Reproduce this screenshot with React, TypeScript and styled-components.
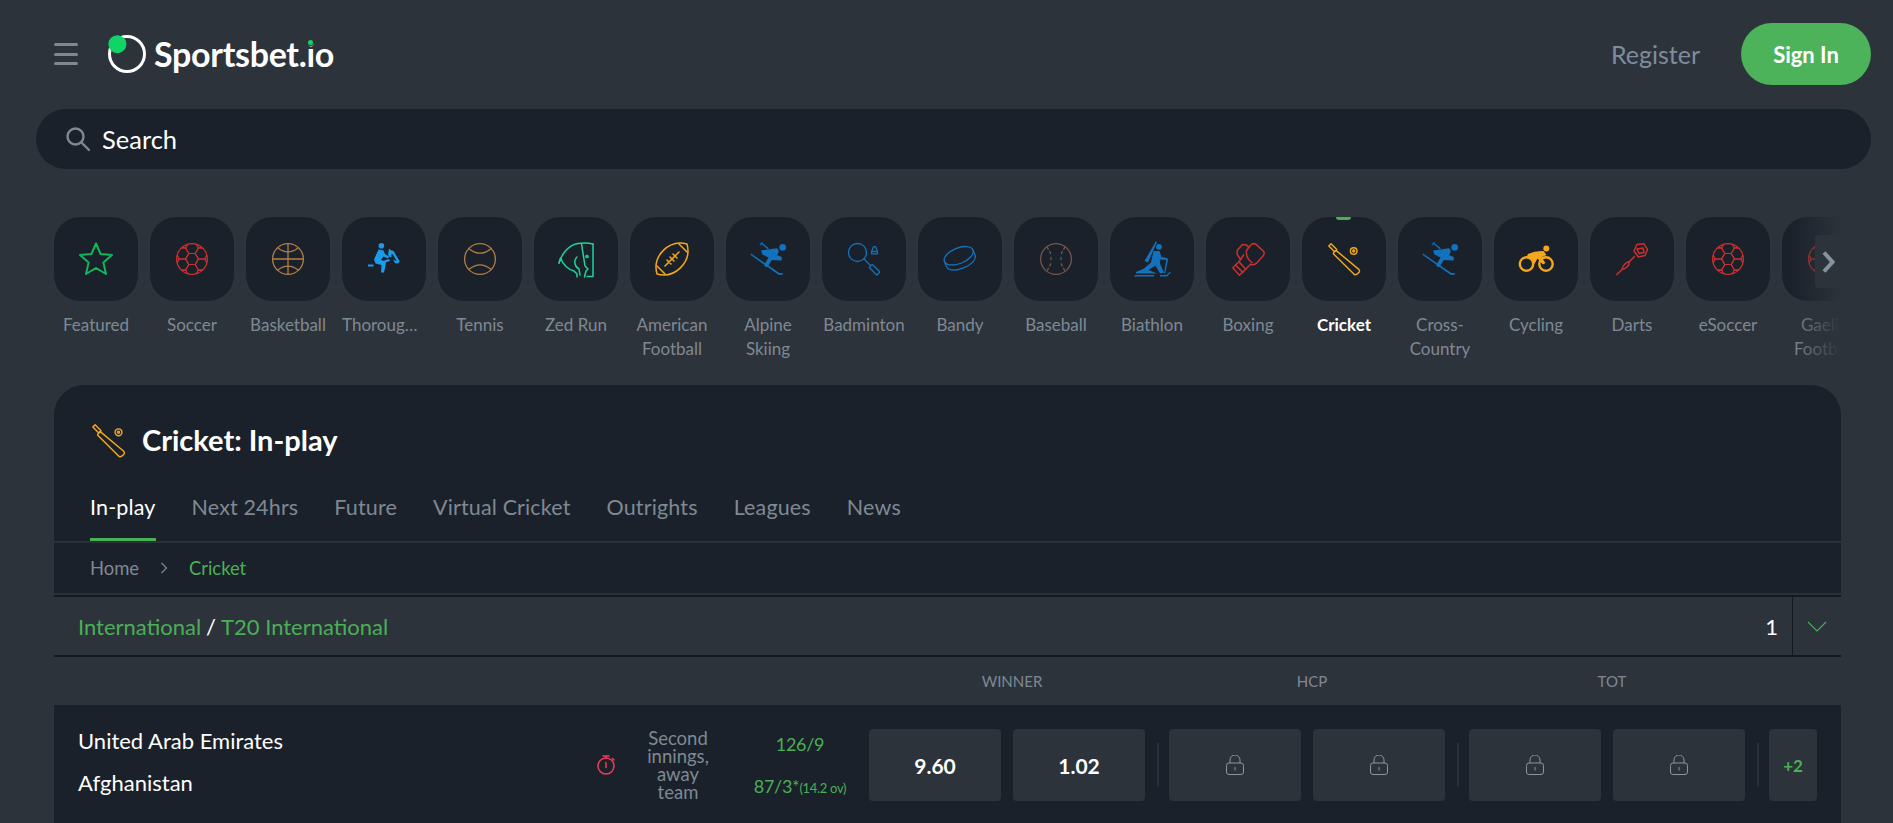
import React from "react";
import styled, { createGlobalStyle } from "styled-components";

const BG = "#2d333b";
const DARK = "#1b212a";
const LINE = "#14181f";
const GREY = "#7e8994";
const GREEN = "#4ab056";
const RED = "#c9302f";
const ORANGE = "#f5a81c";
const BROWN = "#b07f45";
const BLUE = "#1272bd";

const Global = createGlobalStyle`
  html, body { margin: 0; padding: 0; height: 100%; background: ${BG}; overflow: hidden; }
  body { font-family: Lato, "Open Sans", "Liberation Sans", sans-serif; color: #fff; }
  * { box-sizing: border-box; }
`;

const Page = styled.div`
  height: 823px;
  overflow: hidden;
  padding: 23px 22px 0 36px;
`;
const Header = styled.header`
  display: flex;
  align-items: center;
  height: 62px;
  padding-left: 18px;
`;
const Burger = styled.div`
  display: flex;
  flex-direction: column;
  gap: 6.5px;
  width: 24px;
  margin-right: 30px;
  span { display: block; height: 3px; border-radius: 2px; background: ${GREY}; }
`;
const Logo = styled.div`
  display: flex;
  align-items: center;
  gap: 8px;
`;
const LogoText = styled.span`
  position: relative;
  font-size: 34px;
  font-weight: 700;
  letter-spacing: -0.3px;
  line-height: 38px;
`;
const LogoDot = styled.i`
  position: absolute;
  right: 21px;
  top: 5px;
  width: 5px;
  height: 5px;
  border-radius: 50%;
  background: #10d564;
  box-shadow: 0 0 0 1px ${BG};
`;
const Register = styled.a`
  margin-left: auto;
  margin-right: 41px;
  font-size: 25px;
  color: #7e8c9c;
`;
const SignIn = styled.button`
  width: 130px;
  height: 62px;
  border: 0;
  border-radius: 31px;
  background: #4cb35a;
  color: #fff;
  font: 700 22px Lato, sans-serif;
`;
const SearchBar = styled.div`
  display: flex;
  align-items: center;
  gap: 12px;
  height: 60px;
  margin-top: 24px;
  padding-left: 30px;
  border-radius: 30px;
  background: ${DARK};
  font-size: 25.5px;
`;
const Content = styled.div`
  margin: 48px 30px 0 18px;
`;
const Sports = styled.nav`
  position: relative;
  display: flex;
  gap: 12px;
  height: 168px;
  overflow: hidden;
`;
const Sport = styled.div`
  flex: 0 0 84px;
  width: 84px;
  text-align: center;
`;
const Tile = styled.div<{ $active?: boolean }>`
  position: relative;
  display: flex;
  align-items: center;
  justify-content: center;
  width: 84px;
  height: 84px;
  border-radius: 26px;
  background: ${DARK};
  ${(p) => p.$active && `&::before { content: ""; position: absolute; top: 0; left: 34px; width: 15px; height: 3px; border-radius: 0 0 3px 3px; background: ${GREEN}; }`}
`;
const SportLabel = styled.div<{ $active?: boolean }>`
  margin-top: 12px;
  font-size: 17px;
  line-height: 24px;
  overflow: hidden;
  text-overflow: ellipsis;
  color: ${(p) => (p.$active ? "#fff" : GREY)};
  font-weight: ${(p) => (p.$active ? 700 : 400)};
`;
const Fade = styled.div`
  position: absolute;
  top: 0;
  right: 0;
  bottom: 0;
  width: 50px;
  background: linear-gradient(90deg, rgba(45, 51, 59, 0), ${BG} 100%);
`;
const NextButton = styled.div`
  position: absolute;
  top: 18px;
  right: 0;
  display: flex;
  align-items: center;
  justify-content: center;
  width: 26px;
  height: 53px;
  border-radius: 4px;
  background: ${BG};
`;
const Panel = styled.section`
  border-radius: 30px 30px 0 0;
  background: ${DARK};
`;
const TitleRow = styled.div`
  display: flex;
  align-items: center;
  gap: 17px;
  padding: 38px 36px 0 38px;
  height: 72px;
`;
const Title = styled.h1`
  margin: 0;
  font-size: 29px;
  font-weight: 700;
  line-height: 34px;
`;
const Tabs = styled.div`
  display: flex;
  gap: 36px;
  margin-top: 38px;
  padding: 0 36px;
  border-bottom: 2px solid #2b3139;
`;
const Tab = styled.div<{ $active?: boolean }>`
  height: 46px;
  line-height: 24px;
  font-size: 21.5px;
  letter-spacing: 0.15px;
  color: ${(p) => (p.$active ? "#fff" : GREY)};
  border-bottom: 3px solid ${(p) => (p.$active ? GREEN : "transparent")};
`;
const Crumbs = styled.div`
  display: flex;
  align-items: center;
  gap: 21px;
  height: 52px;
  padding: 0 36px;
  border-bottom: 2px solid #2b3139;
  font-size: 18.4px;
  color: ${GREY};
  b { font-weight: 400; color: ${GREEN}; }
`;
const LeagueBar = styled.div`
  display: flex;
  align-items: stretch;
  height: 62px;
  background: ${BG};
  border-top: 2px solid ${LINE};
  border-bottom: 2px solid ${LINE};
  font-size: 22px;
`;
const LeagueName = styled.div`
  flex: 1;
  display: flex;
  align-items: center;
  gap: 5px;
  padding-left: 24px;
  color: #fff;
  span { color: ${GREEN}; }
`;
const Count = styled.div`
  display: flex;
  align-items: center;
  padding-right: 14px;
`;
const Toggle = styled.div`
  display: flex;
  align-items: center;
  justify-content: center;
  width: 49px;
  border-left: 1px solid ${LINE};
`;
const MarketHead = styled.div`
  display: flex;
  align-items: center;
  justify-content: flex-end;
  height: 48px;
  padding: 0 24px;
  background: ${BG};
  font-size: 15px;
  color: ${GREY};
`;
const MarketLabel = styled.div`
  width: 276px;
  padding-left: 10px;
  text-align: center;
`;
const MarketGap = styled.div`
  width: 24px;
`;
const MoreGap = styled.div`
  width: 72px;
`;
const EventRow = styled.div`
  display: flex;
  align-items: center;
  height: 120px;
  padding: 0 24px;
`;
const Teams = styled.div`
  flex: 1;
  display: flex;
  flex-direction: column;
  gap: 17px;
  margin-bottom: 7px;
  font-size: 22px;
  line-height: 25px;
`;
const Status = styled.div`
  width: 100px;
  margin: 0 12px;
  text-align: center;
  font-size: 18.5px;
  line-height: 18px;
  color: ${GREY};
`;
const Scores = styled.div`
  width: 120px;
  display: flex;
  flex-direction: column;
  gap: 20px;
  margin-top: 2px;
  text-align: center;
  font-size: 18px;
  letter-spacing: -0.3px;
  line-height: 22px;
  color: ${GREEN};
  small { font-size: 13px; }
`;
const Markets = styled.div`
  display: flex;
  align-items: center;
  margin-left: 9px;
`;
const OddGroup = styled.div`
  display: flex;
  gap: 12px;
`;
const Odd = styled.div`
  display: flex;
  align-items: center;
  justify-content: center;
  width: 132px;
  height: 72px;
  border-radius: 4px;
  background: ${BG};
  font-size: 21px;
  font-weight: 700;
`;
const Sep = styled.div`
  width: 2px;
  height: 44px;
  margin: 0 10px 0 12px;
  background: #2b3139;
`;
const More = styled(Odd)`
  width: 48px;
  font-size: 17px;
  color: ${GREEN};
`;

type IP = { c: string; children?: React.ReactNode };
const Line = ({ c, children }: IP) => (
  <svg width="32" height="32" viewBox="0 0 32 32" fill="none" stroke={c} strokeWidth="1.3" strokeLinecap="round" strokeLinejoin="round" style={{ overflow: "visible" }}>
    {children}
  </svg>
);
const Fill = ({ c, children }: IP) => (
  <svg width="32" height="32" viewBox="0 0 32 32" fill={c} stroke="none" style={{ overflow: "visible" }}>
    {children}
  </svg>
);

const Star = () => (
  <svg width="34" height="34" viewBox="0 0 34 34" fill="none" stroke="#10b65a" strokeWidth="2" strokeLinejoin="round">
    <polygon points="17,1.5 21.6,12 33,13 24.4,20.6 27,32 17,26 7,32 9.6,20.6 1,13 12.4,12" />
  </svg>
);

const hexes: string[] = [];
const R = 6.4;
for (let col = -2; col <= 2; col++) {
  for (let row = -2; row <= 2; row++) {
    const cx = 16 + 1.5 * R * col;
    const cy = 16 + Math.sqrt(3) * R * (row + (Math.abs(col) % 2) / 2);
    const pts = [0, 60, 120, 180, 240, 300]
      .map((a) => `${(cx + R * Math.cos((a * Math.PI) / 180)).toFixed(2)},${(cy + R * Math.sin((a * Math.PI) / 180)).toFixed(2)}`)
      .join(" ");
    hexes.push(pts);
  }
}
const Soccer = ({ id }: { id: string }) => (
  <Line c={RED}>
    <clipPath id={id}>
      <circle cx="16" cy="16" r="15.4" />
    </clipPath>
    <circle cx="16" cy="16" r="15.4" />
    <g clipPath={`url(#${id})`} strokeWidth="1.1">
      {hexes.map((p, i) => (
        <polygon key={i} points={p} />
      ))}
    </g>
  </Line>
);
const Basketball = () => (
  <Line c={BROWN}>
    <circle cx="16" cy="16" r="15.4" />
    <path d="M.6 16H31.4M16 .6V31.4M5.5 4.8Q16 13 26.5 4.8M5.5 27.2Q16 19 26.5 27.2" />
  </Line>
);
const Tennis = () => (
  <Line c={BROWN}>
    <circle cx="16" cy="16" r="15.4" />
    <path d="M4.8 5.4Q16 15 27.2 5.4M4.8 26.6Q16 17 27.2 26.6" />
  </Line>
);
const Thoroughbred = () => (
  <Fill c="#1a9bec">
    <circle cx="13.4" cy="2.8" r="2.8" />
    <path d="M10.5 6.5L15.5 7.5L17 11L21 13.5L20 15.5L15.5 13.5L13 17L18 18.5L17.5 22.5L16 29.5L13 29.5L13.5 22L7.5 20.5L6 16.5Z" />
    <path d="M0 21.5H5.5V23.5H0Z" />
    <path d="M17 19.5L22 18L21 16L16 17.5Z" />
    <path d="M20 11.5L21 5.5L22.5 7L25.5 8L31.8 18.5L30 20.5L27 20.2L25 16.5L27 17.5L28.5 18L25 11.5L23.5 11L23.5 14.5L21.5 14Z" />
  </Fill>
);
const ZedRun = () => (
  <Line c="#1ed29a">
    <g strokeWidth="1.5">
      <path d="M-1 20C2 10 9 2 18 .5C24-.5 29 0 33 1" />
      <path d="M21.5 .5L25 23L28 26L26 28L24.5 34" />
      <path d="M33 1V32L33 33.5H27" />
      <path d="M-1 20L.5 15C3 22 9 27 14 28L17 31L17 34" />
      <path d="M17 14C13 18 15 24 19 26L20 32" />
      <circle cx="27" cy="13.5" r="1.1" />
    </g>
  </Line>
);
const AmFootball = () => (
  <Line c={ORANGE}>
    <g strokeWidth="1.5">
      <path d="M1 31C-4 13 13-4 31 1C36 19 19 36 1 31Z" />
      <path d="M1 23L9 31M23 1L31 9M9 23L23 9M11 17L15 21M14 14L18 18M17 11L21 15" />
    </g>
  </Line>
);
const Skier = () => (
  <Fill c={BLUE}>
    <circle cx="30.7" cy="4.4" r="3.3" />
    <path d="M9 7.5L25 5.2Q28.5 8 25 12L30 14.2L29.5 17.5L20 17L15 24.5L12 22.5L16.5 14.5L10.5 11.5Z" />
    <path d="M-1.5 11.8L-.7 10.7L26.5 29.5Q28.5 30.5 31 30V31.5Q27.5 32.5 25.5 31Z" />
    <path d="M8.4 .3L9.1-.6L17 5.2L15.8 6.2Z" />
    <path d="M7.5 1.8L10.5-1L11.2-.3L8.2 2.5Z" />
  </Fill>
);
const Badminton = () => (
  <Line c={BLUE}>
    <circle cx="9.5" cy="9.5" r="9" />
    <path d="M16 16L22.5 22.5" />
    <rect x="21" y="24.5" width="11" height="4.4" rx="1" transform="rotate(45 26.5 26.7)" />
    <path d="M23.5 10.8H29.5V9L28 4.6A1.6 1.6 0 0 0 25 4.6L23.5 9Z" />
    <path d="M24 8.5H29" />
  </Line>
);
const Puck = () => (
  <Line c={BLUE}>
    <g transform="rotate(-22 16 16)">
      <ellipse cx="16" cy="12.5" rx="15.4" ry="7.8" />
      <path d="M.6 12.5V18C.6 22.5 7.5 25.6 16 25.6S31.4 22.5 31.4 18V12.5" />
    </g>
  </Line>
);
const Baseball = () => (
  <Line c="#76574c">
    <circle cx="16" cy="16" r="15.4" />
    <path d="M7 4.5Q10 8 10.6 11M11 14.5V17.5M10.6 21Q10 24 7 27.5M25 4.5Q22 8 21.4 11M21 14.5V17.5M21.4 21Q22 24 25 27.5" strokeDasharray="2 3" />
  </Line>
);
const Biathlon = () => (
  <Fill c={BLUE}>
    <circle cx="23" cy="3.8" r="2.9" />
    <path d="M19.8-1.6L21-1L12 19.5L8.5 18Z" />
    <path d="M17.5 8L23.5 8L25.5 14L31 15L30.8 17L23.8 16.5L24.2 21L28 29.8L24 30.5L19.5 22.5L12.5 27L21 30.5H0V29L8 25.5L15 19.5Z" />
    <path d="M30.5 15.5H32.2L29.2 30.5H28Z" />
    <path d="M-1 32H18V33.4H-1.8ZM24 32H30.5L34 28.5L34.8 29.5L31 33.4H24Z" />
  </Fill>
);
const Boxing = () => (
  <Line c={RED}>
    <g strokeWidth="1.5">
      <path d="M.8 24.8L7 18.7L13.7 26.3L7.4 32.2Z" />
      <path d="M3.5 22L10.8 29.4" />
      <path d="M7 18.7L8.6 16.5L5.2 11.5V7.5L10.5 1.5L14 1.8L16.5 3.8" />
      <path d="M14.5 7.5L18.8 2Q21.3-.4 24 1.4L31.5 8.2Q33 10.4 31.2 12.8L24.8 20Q22 22.5 18.6 21.2L13.7 26.3" />
      <path d="M14.5 7.5Q13.5 15 20 19.5M8.6 16.5L11.5 12" />
    </g>
  </Line>
);
const CricketIcon = ({ size = 32 }: { size?: number }) => (
  <svg width={size} height={size} viewBox="0 0 32 32" fill="none" stroke={ORANGE} strokeWidth="1.4" strokeLinejoin="round" style={{ overflow: "visible" }}>
    <path d="M.8 3L3 .8L8.8 6.6L6.6 8.8Z" />
    <path d="M8 7.4L30.8 26.4Q32.2 28 30.8 29.6L28.8 31.2Q27 32.4 25.6 30.8L5.6 11Q5 9.8 6.2 9Z" />
    <circle cx="25.7" cy="8" r="3.3" />
    <circle cx="25.7" cy="8" r="1" />
  </svg>
);
const Cycling = () => (
  <Fill c={ORANGE}>
    <circle cx="26.3" cy="5.4" r="3" />
    <path d="M8 11Q15 7.6 23.5 8L26.5 12L21.5 14.2L25.5 20L23 21.5L17.5 15.5L14.5 21L12 16L6.5 14Z" />
    <circle cx="6.5" cy="21" r="6.7" fill="none" stroke={ORANGE} strokeWidth="2.4" />
    <circle cx="26" cy="21" r="6.7" fill="none" stroke={ORANGE} strokeWidth="2.4" />
  </Fill>
);
const Dart = () => (
  <Line c={RED}>
    <g strokeWidth="1.5">
      <polygon points="21,1.5 28,0.8 31.5,6.5 29,12.5 22.5,14 18,8" />
      <path d="M21 6L27 5L28 9.5L23 10.5Z" />
      <path d="M18.5 13.5L13.5 18.5" />
      <path d="M13.5 18.5C10 19 6.5 22.5 6 26.5C10 26 13.5 22.5 13.5 18.5Z" />
      <path d="M6 26.5L.8 31.5" />
    </g>
  </Line>
);

const sports: { label: string; icon: React.ReactNode; active?: boolean }[] = [
  { label: "Featured", icon: <Star /> },
  { label: "Soccer", icon: <Soccer id="s1" /> },
  { label: "Basketball", icon: <Basketball /> },
  { label: "Thoroughbred", icon: <Thoroughbred /> },
  { label: "Tennis", icon: <Tennis /> },
  { label: "Zed Run", icon: <ZedRun /> },
  { label: "American Football", icon: <AmFootball /> },
  { label: "Alpine Skiing", icon: <Skier /> },
  { label: "Badminton", icon: <Badminton /> },
  { label: "Bandy", icon: <Puck /> },
  { label: "Baseball", icon: <Baseball /> },
  { label: "Biathlon", icon: <Biathlon /> },
  { label: "Boxing", icon: <Boxing /> },
  { label: "Cricket", icon: <CricketIcon />, active: true },
  { label: "Cross-Country", icon: <Skier /> },
  { label: "Cycling", icon: <Cycling /> },
  { label: "Darts", icon: <Dart /> },
  { label: "eSoccer", icon: <Soccer id="s2" /> },
  { label: "Gaelic Football", icon: <Soccer id="s3" /> },
];

const Lock = () => (
  <svg width="18" height="20" viewBox="0 0 18 20" fill="none" stroke="#8a95a0" strokeWidth="1">
    <path d="M4 8V5a5 5 0 0 1 10 0v3" />
    <rect x=".5" y="8" width="17" height="11.5" rx="2.5" />
    <path d="M9 12v3.5" />
  </svg>
);

export default function App() {
  return (
    <>
      <Global />
      <Page>
        <Header>
          <Burger>
            <span />
            <span />
            <span />
          </Burger>
          <Logo>
            <svg width="38" height="38" viewBox="0 0 38 38">
              <circle cx="19" cy="19" r="17.5" fill="none" stroke="#fff" strokeWidth="3" />
              <circle cx="9.4" cy="9.2" r="9" fill="#10d564" />
            </svg>
            <LogoText>
              Sportsbet.io
              <LogoDot />
            </LogoText>
          </Logo>
          <Register>Register</Register>
          <SignIn>Sign In</SignIn>
        </Header>
        <SearchBar>
          <svg width="24" height="24" viewBox="0 0 24 24" fill="none" stroke={GREY} strokeWidth="2.4" strokeLinecap="round">
            <circle cx="9.5" cy="9.5" r="8" />
            <path d="M15.5 15.5L23 23" />
          </svg>
          Search
        </SearchBar>
        <Content>
          <Sports>
            {sports.map((s) => (
              <Sport key={s.label}>
                <Tile $active={s.active}>{s.icon}</Tile>
                <SportLabel $active={s.active}>{s.label}</SportLabel>
              </Sport>
            ))}
            <Fade />
            <NextButton>
              <svg width="13" height="22" viewBox="0 0 13 22" fill="none" stroke="#8593a0" strokeWidth="4">
                <path d="M2 1.5L10.5 11L2 20.5" />
              </svg>
            </NextButton>
          </Sports>
          <Panel>
            <TitleRow>
              <CricketIcon size={33} />
              <Title>Cricket: In-play</Title>
            </TitleRow>
            <Tabs>
              <Tab $active>In-play</Tab>
              <Tab>Next 24hrs</Tab>
              <Tab>Future</Tab>
              <Tab>Virtual Cricket</Tab>
              <Tab>Outrights</Tab>
              <Tab>Leagues</Tab>
              <Tab>News</Tab>
            </Tabs>
            <Crumbs>
              Home
              <svg width="8" height="12" viewBox="0 0 8 12" fill="none" stroke={GREY} strokeWidth="1.2">
                <path d="M1.5 1L6.5 6L1.5 11" />
              </svg>
              <b>Cricket</b>
            </Crumbs>
            <LeagueBar>
              <LeagueName>
                <span>International</span> / <span>T20 International</span>
              </LeagueName>
              <Count>1</Count>
              <Toggle>
                <svg width="20" height="11" viewBox="0 0 20 11" fill="none" stroke={GREEN} strokeWidth="1.1">
                  <path d="M1 1L10 10L19 1" />
                </svg>
              </Toggle>
            </LeagueBar>
            <MarketHead>
              <MarketLabel>WINNER</MarketLabel>
              <MarketGap />
              <MarketLabel>HCP</MarketLabel>
              <MarketGap />
              <MarketLabel>TOT</MarketLabel>
              <MoreGap />
            </MarketHead>
            <EventRow>
              <Teams>
                <div>United Arab Emirates</div>
                <div>Afghanistan</div>
              </Teams>
              <svg width="20" height="20" viewBox="0 0 20 20" fill="none" stroke="#ef3e5b" strokeWidth="1.5" strokeLinecap="round">
                <circle cx="10" cy="11" r="8" />
                <path d="M7 1H13M10 1V3M16.5 3.5L18 5M10 7.5V12.5" />
              </svg>
              <Status>
                Second
                <br />
                innings,
                <br />
                away
                <br />
                team
              </Status>
              <Scores>
                <div>126/9</div>
                <div>
                  87/3*<small>(14.2 ov)</small>
                </div>
              </Scores>
              <Markets>
                <OddGroup>
                  <Odd>9.60</Odd>
                  <Odd>1.02</Odd>
                </OddGroup>
                <Sep />
                <OddGroup>
                  <Odd>
                    <Lock />
                  </Odd>
                  <Odd>
                    <Lock />
                  </Odd>
                </OddGroup>
                <Sep />
                <OddGroup>
                  <Odd>
                    <Lock />
                  </Odd>
                  <Odd>
                    <Lock />
                  </Odd>
                </OddGroup>
                <Sep />
                <More>+2</More>
              </Markets>
            </EventRow>
          </Panel>
        </Content>
      </Page>
    </>
  );
}
